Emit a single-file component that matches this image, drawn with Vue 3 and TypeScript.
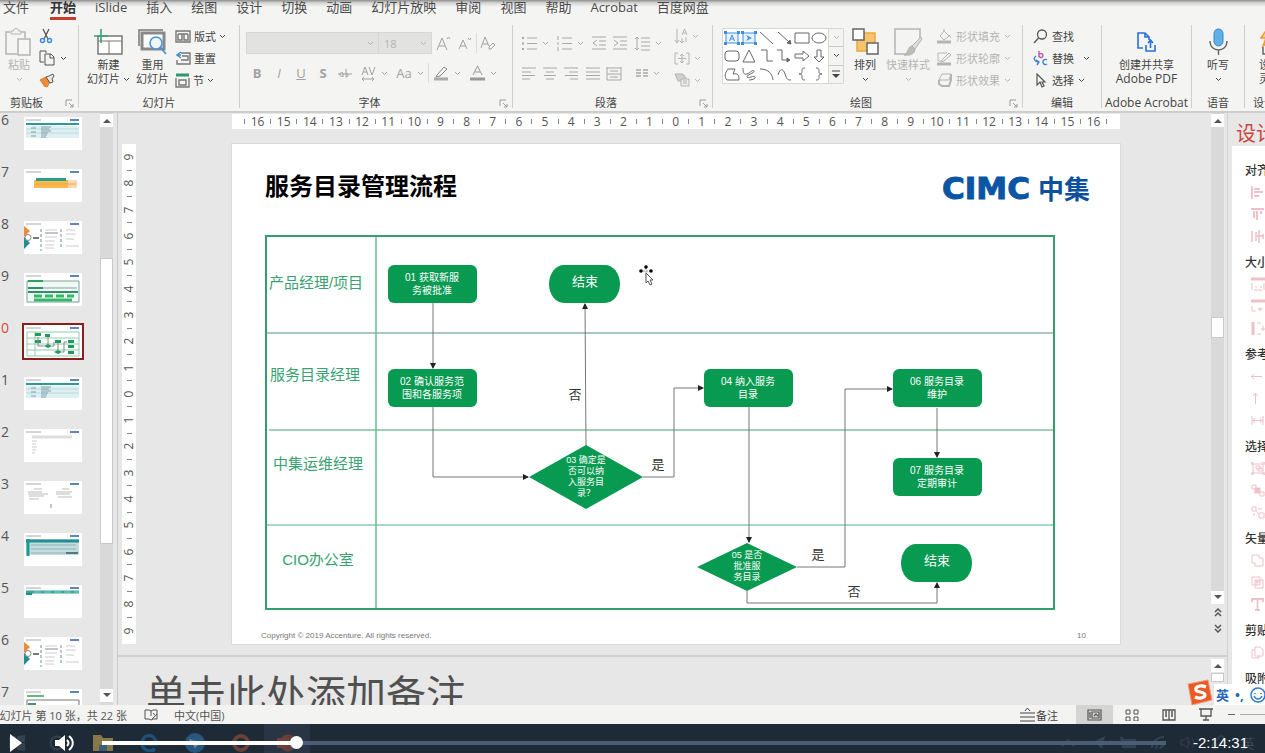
<script setup lang="ts">
import { computed, h, ref, type FunctionalComponent } from 'vue'

type Art = [number, number, string]

const art: Record<string, Art> = {
  chev: [7, 5, '<path d="M1 1l2.500 2.500L6 1"/>'],
  launcher: [9, 9, '<path d="M1 7V1h6M4 4l4 4M8 5v3H5" />'],
  paste: [28, 30, '<path d="M5 5H1v22h11M16 5h4v6" stroke-width="1.500"/><path d="M6 7V4h2.500a2.500 2.500 0 0 1 5 0H16v3z" fill="#f4f4f3"/><path d="M13 12h12v16H13z" fill="#f6f6f5" stroke-width="1.500"/>'],
  cut: [14, 16, '<path d="M4 1l5 10M10 1L5 11" stroke="#555" stroke-width="1.300"/><circle cx="3.500" cy="12.500" r="2" stroke="#3f8ddd" stroke-width="1.500"/><circle cx="10.500" cy="12.500" r="2" stroke="#3f8ddd" stroke-width="1.500"/>'],
  copy: [17, 16, '<path d="M5 12H1V1h6v2M6 4h6l3 3v8H6zM11 4v4h4" stroke="#555"/>'],
  brush: [16, 15, '<path d="M1 7l6-3 4 5-3 5-3-1-1-2z" fill="#f08b3a" stroke="#e07b2a"/><path d="M7 4l3-1 4-2 1 2-2 3 1 3-3 1z" fill="#e8e8e8" stroke="#555"/>'],
  newSlide: [29, 26, '<path d="M4 7h24v18H4z" stroke="#777" stroke-width="1.500" fill="#fff"/><path d="M4 12h24M15 12v13" stroke="#777"/><path d="M7 0v14M0 7h14" stroke="#35a374" stroke-width="1.600"/>'],
  reuse: [29, 27, '<path d="M1 18V2h24" stroke="#777" stroke-width="1.500"/><path d="M4 5h22v16H4z" stroke="#888" stroke-width="3" fill="#fff"/><circle cx="18" cy="15" r="6" stroke="#4b93d6" stroke-width="1.600" fill="#eef6fd"/><path d="M22 19l6 7" stroke="#4b93d6" stroke-width="1.800"/>'],
  layout: [16, 13, '<path d="M1 1h14v11H1zM3 4h10M3 4v6h4V4M9 4v6h4V4" stroke="#777" stroke-width="1.400"/>'],
  reset: [16, 14, '<path d="M6 2h9v11H2V9M7 5h6v4H6" stroke="#777" stroke-width="1.400"/><path d="M6 1L2 4l4 3M2 4h4" stroke="#3f8ddd" stroke-width="1.500"/>'],
  section: [15, 15, '<path d="M1 2h13" stroke="#2d9871" stroke-width="3"/><path d="M1 5v9h13V5M4 7h7v5H4z" stroke="#777" stroke-width="1.400"/>'],
  growA: [15, 15, '<path d="M1 14L6 2l5 12M3 10h6M11 3l1.500-2L14 3"/>'],
  shrinkA: [14, 13, '<path d="M1 12L5 3l4 9M2.500 9h5M10 1l1.500 2L13 1"/>'],
  clearA: [16, 15, '<path d="M1 12L5 1l4 9M3 8h5"/><path d="M9 11l4-4 2 2-4 4H9z"/>'],
  abc: [14, 10, '<path d="M0 6h14M5 8a2 2 0 1 1 0-3v4M8 1v8a2 2 0 1 0 0-4"/>'],
  av: [15, 15, '<path d="M1 9l3-8 3 8M2 6h4M8 1l3 8 3-8M1 13h12M3 11l-2 2 2 2M11 11l2 2-2 2"/>'],
  pen: [16, 16, '<path d="M4 10l7-8 3 2-7 7-4 1z" stroke="#888"/><path d="M1 14h14" stroke="#aaa" stroke-width="3"/>'],
  fontColor: [15, 16, '<path d="M3 10L7.500 1 12 10M5 7h5" stroke="#999"/><path d="M0 14h15" stroke="#999" stroke-width="3"/>'],
  bullets: [15, 15, '<path d="M5 2h10M5 7.500h10M5 13h10"/><path d="M0 2h2M0 7.500h2M0 13h2" stroke-width="2"/>'],
  numbers: [15, 15, '<path d="M5 2h10M5 7.500h10M5 13h10M1 0v4M1 6v3M1 11v4"/>'],
  outdent: [14, 14, '<path d="M0 1h14M7 5h7M7 9h7M0 13h14M5 4L1 7l4 3"/>'],
  indent: [14, 14, '<path d="M0 1h14M7 5h7M7 9h7M0 13h14M1 4l4 3-4 3"/>'],
  spacing: [15, 15, '<path d="M6 2h9M6 6h9M6 10h9M6 14h9M2 1v13M0 3l2-2 2 2M0 12l2 2 2-2"/>'],
  alignL: [14, 13, '<path d="M0 1h14M0 5h9M0 8.500h13M0 12h8"/>'],
  alignC: [14, 13, '<path d="M0 1h14M3 5h8M1 8.500h12M3 12h8"/>'],
  alignR: [14, 13, '<path d="M0 1h14M5 5h9M1 8.500h13M6 12h8"/>'],
  justify: [14, 13, '<path d="M0 1h14M0 5h14M0 8.500h14M0 12h14"/>'],
  distribute: [16, 15, '<path d="M1 1v13M15 1v13M1 2h14M4 5h8M1 8h14M4 11h8M1 14h14"/>'],
  columns: [12, 9, '<path d="M0 1h5M0 4h5M0 7h5M7 1h5M7 4h5M7 7h5" stroke-width="1.500"/>'],
  textDir: [14, 16, '<path d="M3 1v13M1 12l2 3 2-3M8 10v5M6 13l2 2 2-2M8 7l2.500-6L13 7M9 5h3M12 9v5"/>'],
  textBox: [16, 13, '<path d="M4 1H1v11h3M12 1h3v11h-3M4 6.500h8M8 2v9M6 4l2-2 2 2M6 9l2 2 2-2"/>'],
  smartArt: [16, 14, '<path d="M1 1h8l3 4-3 3H4z" fill="#d0d0d0"/><path d="M7 6h8v7H7z" fill="#eee"/><path d="M9 8h4M9 10h4"/>'],
  boxA: [16, 14, '<path d="M2 2h12v10H2z" stroke="#3f8ddd" fill="#eaf3fc"/><path d="M5.500 10L8 4l2.500 6M6.500 8h3" stroke="#3f8ddd"/><path d="M0 0h3v3H0zM13 0h3v3h-3zM0 11h3v3H0zM13 11h3v3h-3z" fill="#3f8ddd" stroke="none"/>'],
  boxB: [16, 14, '<path d="M2 2h12v10H2z" stroke="#3f8ddd" fill="#eaf3fc"/><path d="M5 4l6 3-6 3 2-3z" fill="#3f8ddd" stroke="none"/><path d="M0 0h3v3H0zM13 0h3v3h-3zM0 11h3v3H0zM13 11h3v3h-3z" fill="#3f8ddd" stroke="none"/>'],
  line: [15, 14, '<path d="M1 1l13 12"/>'],
  arrowLine: [15, 14, '<path d="M1 1l11 10"/><path d="M14 13l-4-1 3-3z" fill="currentColor"/>'],
  rect: [16, 12, '<path d="M1 1h14v10H1z"/>'],
  oval: [16, 12, '<ellipse cx="8" cy="6" rx="7" ry="5"/>'],
  round: [16, 12, '<rect x="1" y="1" width="14" height="10" rx="3"/>'],
  tri: [14, 14, '<path d="M7 1l6 12H1z"/>'],
  elbow: [14, 14, '<path d="M1 1h6v11h6"/>'],
  elbowArrow: [14, 14, '<path d="M0 1h5v10h7"/><path d="M13 11l-3-2v4z" fill="currentColor"/>'],
  rightArrow: [16, 12, '<path d="M1 4h8V1l6 5-6 5V8H1z"/>'],
  downArrow: [12, 14, '<path d="M4 1h4v7h3l-5 5-5-5h3z"/>'],
  freeform: [16, 13, '<path d="M4 1h7L9 6c5-1 6 1 6 6H3c-3-3-2-7 1-11z"/>'],
  scribble: [14, 14, '<path d="M1 1c0 5 1 7 4 6s6-5 7-3-8 4-7 6 7-2 8 0-4 3-6 3"/>'],
  arc: [15, 13, '<path d="M1 1c8 0 12 4 13 11"/>'],
  curve: [15, 13, '<path d="M1 7C3 0 6 0 8 6s3 6 6 6"/>'],
  braceL: [8, 14, '<path d="M7 1C4 1 4 2 4 4s0 3-3 3c3 0 3 1 3 3s0 3 3 3"/>'],
  braceR: [8, 14, '<path d="M1 1c3 0 3 1 3 3s0 3 3 3c-3 0-3 1-3 3s0 3-3 3"/>'],
  arrange: [27, 27, '<path d="M5 5h18v18H5z" fill="#f7c46c" stroke="#f0a63c" stroke-width="1.500"/><path d="M1 1h11v11H1zM15 15h11v11H15z" fill="#fff" stroke="#666" stroke-width="1.500"/>'],
  quick: [29, 28, '<path d="M14 26H1V1h25v12" stroke-width="1.500"/><path d="M27 9l-9 9 3 3 7-10z" fill="#ddd"/><path d="M18 18c-4 0-3 6-8 9 6 1 11-1 11-6z" fill="#bbb"/>'],
  fill: [15, 15, '<path d="M3 7l4-5 5 5-5 4zM7 2V0M12 6l2 3"/><path d="M0 13h14" stroke-width="3"/>'],
  outline: [15, 15, '<path d="M10 2H1v8h3M5 9l7-7 2 2-7 6-3 1z"/><path d="M0 13h14" stroke-width="3"/>'],
  effect: [15, 14, '<path d="M5 1h9l-2 6H2z"/><path d="M2 7v4l3 2h7l2-6V1" stroke-width="2"/>'],
  find: [15, 15, '<circle cx="9" cy="5.500" r="4.500" stroke="#555" stroke-width="1.300"/><path d="M5.500 9L1 14" stroke="#555" stroke-width="1.300"/>'],
  replace: [15, 15, '<path d="M6 0v6M6 4a2 2 0 1 1 0 1" stroke="#b45ab0" stroke-width="1.400"/><path d="M14 9a2.500 2.500 0 1 0 0 4M3 5c-3 2-2 5 2 6M3 9l3 2-2 3" stroke="#3f7fd0" stroke-width="1.400"/>'],
  select: [11, 15, '<path d="M2 1v11l3-3 2 5 2-1-2-4h3z" stroke="#555" stroke-width="1.200"/>'],
  pdf: [19, 20, '<path d="M6 16H1V1h7l4 4v3M8 1v4h4" stroke="#2b6fe0" stroke-width="1.600"/><path d="M9 13v6h9v-6M13.500 16V9M11 11l2.500-3 2.500 3" stroke="#2b6fe0" stroke-width="1.600"/>'],
  mic: [19, 28, '<rect x="5" y="1" width="9" height="17" rx="4.500" fill="#62b0ea" stroke="#3c86c8"/><path d="M1 13c0 12 17 12 17 0M9.500 22v5" stroke="#666" stroke-width="1.400"/>'],
  bolt: [22, 28, '<path d="M8 1h10l-5 7h6L4 18l3-8H2z" fill="#fbd08a" stroke="#ee9a35" stroke-width="1.500"/><path d="M4 19v7h18M8 22h14" stroke="#666" stroke-width="1.500"/>'],
  up: [8, 5, '<path d="M0 5l4-4 4 4z" fill="currentColor" stroke="none"/>'],
  down: [8, 5, '<path d="M0 0l4 4 4-4z" fill="currentColor" stroke="none"/>'],
  more: [8, 8, '<path d="M0 1h8"/><path d="M0 4l4 4 4-4z" fill="currentColor" stroke="none"/>'],
  pageUp: [8, 9, '<path d="M1 4l3-3 3 3M1 8l3-3 3 3" stroke-width="1.500"/>'],
  pageDown: [8, 9, '<path d="M1 1l3 3 3-3M1 5l3 3 3-3" stroke-width="1.500"/>'],
  spell: [14, 12, '<path d="M1 1h4l2 1 2-1h4v9H9l-2 1-2-1H1zM7 2v5M9 4l2 2M8 10l5-5"/>'],
  notes: [15, 15, '<path d="M0 6h15M0 10h15M0 14h15M5 4l2.500-3L10 4"/>'],
  normal: [15, 12, '<path d="M1 1h13v10H1zM3 3v6M5 3h7v6H5zM7 7l2-2 2 2" stroke-width="1.200"/>'],
  sorter: [14, 12, '<path d="M1 1h4v4H1zM9 1h4v4H9zM1 8h4v4H1zM9 8h4v4H9z"/>'],
  reading: [14, 12, '<path d="M1 1h6v10H1zM7 1h6v10H7zM3 3h2M3 5h2M3 7h2M9 3h2M9 5h2M9 7h2" stroke-width="1.300"/>'],
  show: [14, 13, '<path d="M0 1h14M2 1v7h10V1M7 8v4M4 12h6" stroke-width="1.300"/>'],
  d1: [13, 13, '<path d="M1 0v13M3 3h6M3 6h9M3 10h5" stroke-width="1.800"/>'],
  d2: [13, 13, '<path d="M0 1h13M3 3v7M6 3v9M10 3v3" stroke-width="2"/>'],
  d3: [13, 13, '<path d="M1 1v11M5 2v9M8 0v13M12 4v5M5 6h8" stroke-width="1.500"/>'],
  s1: [14, 14, '<path d="M0 2h14" stroke-width="3"/><path d="M1 6v7M13 6v7M4 10h2M9 10h2M3 13h8"/>'],
  s2: [14, 14, '<path d="M0 2h14" stroke-width="3"/><path d="M1 7v5h4M9 8v4M7 10h5"/>'],
  s3: [14, 13, '<path d="M2 0v13" stroke-width="3"/><path d="M6 1h4M6 12h4M12 4v5M10 7h4"/>'],
  r1: [11, 9, '<path d="M0 4.500h11M3 2L0 4.500 3 7"/>'],
  r2: [9, 11, '<path d="M4.500 0v11M2 3l2.500-3L7 3"/>'],
  r3: [13, 9, '<path d="M1 0v9M12 0v9M2 4.500h9M4 2L2 4.500 4 7M9 2l2 2.500L9 7"/>'],
  p1: [14, 13, '<path d="M2 2h10v9H2zM5 4h4v3H5zM7 6h4v3H7z"/><path d="M0 0h2v2H0zM12 0h2v2h-2zM0 11h2v2H0zM12 11h2v2h-2z"/>'],
  p2: [14, 13, '<path d="M1 1h4v4H1zM9 8h4v4H9z"/><path d="M4 4h5v5H4z" fill="currentColor"/>'],
  p3: [14, 13, '<path d="M1 1h4v4H1zM8 7h5v5H8zM5 5l3 3M7 3h4M3 7v3"/>'],
  v1: [13, 13, '<path d="M1 1h7v3h4v8H4V9H1z"/>'],
  v2: [13, 13, '<path d="M1 1h8v8H1zM4 4h8v8H4zM4 6h5M6 4v5"/>'],
  v3: [13, 13, '<path d="M1 4V1h11v3M6.500 1v11M4 12h5" stroke-width="1.800"/>'],
  c1: [13, 13, '<path d="M4 1h5l3 3v6H4zM4 4H1v8h7v-2"/>'],
  play: [12, 18, '<path d="M0 0l12 9-12 9z" fill="#fff" stroke="none"/>'],
  volume: [20, 18, '<path d="M0 6h4l6-5v16l-6-5H0z" fill="#fff" stroke="none"/><path d="M12 6c2 2 2 4 0 6M14 2c5 4 5 10 0 14" stroke="#fff" stroke-width="2"/>'],
  win: [16, 16, '<path d="M0 2l7-1v6H0zM8 1l8-1v7H8zM0 8h7v6l-7-1zM8 8h8v8l-8-1z" fill="currentColor" stroke="none"/>'],
  cortana: [16, 16, '<circle cx="8" cy="8" r="6.500" stroke-width="2"/>'],
  folder: [20, 17, '<path d="M0 1h8l2 3h10v13H0z" fill="#b49a52" stroke="none"/><path d="M6 17v-6h8v6" fill="#4a7593" stroke="none"/>'],
  edge: [18, 18, '<path d="M2 10h14c0-11-13-11-14-1 0 8 9 9 13 6" stroke="#1d6296" stroke-width="3.500"/>'],
  bird: [20, 20, '<circle cx="10" cy="10" r="10" fill="#2d6a9c" stroke="none"/><path d="M4 5c3 3 7 3 12 3-2 4-5 5-6 8-1-4-5-6-6-11z" fill="#8fb0ca" stroke="none"/>'],
  orange: [18, 18, '<circle cx="9" cy="9" r="7" stroke="#8a4a38" stroke-width="4"/>'],
  ppt: [20, 18, '<circle cx="11" cy="9" r="8.500" fill="#7c4539" stroke="none"/><path d="M0 4h10v10H0z" fill="#8f4736" stroke="none"/>'],
  tUp: [14, 8, '<path d="M1 7l6-6 6 6" stroke-width="2"/>'],
  plane: [14, 13, '<path d="M0 7L14 0l-3 13-4-4z" fill="currentColor" stroke="none"/>'],
  cam: [16, 11, '<path d="M0 0h3l1 2h12v9H2z" fill="currentColor" stroke="none"/>'],
  wifi: [14, 14, '<path d="M1 12C1 6 6 1 13 1M5 13c0-4 3-7 8-7M9 13c0-2 2-3 4-3" stroke-width="2"/>'],
  tVol: [16, 13, '<path d="M1 4h3l4-3v11L4 9H1zM10 4v5M12 2c2 3 2 6 0 9"/>'],
  link: [15, 15, '<path d="M6 9l-4 4M6 5l2-3c3-3 7 1 4 4l-3 3M9 10l-3 3c-3 2-6-1-4-4l3-3" stroke-width="1.500"/>'],
  smile: [16, 16, '<circle cx="8" cy="8" r="7" stroke="#2f7bd0" stroke-width="1.500"/><path d="M5 6v1M11 6v1M4 9c2 4 6 4 8 0" stroke="#2f7bd0" stroke-width="1.500"/>'],
  sogou: [28, 27, '<path d="M2 5l20-4 4 20-20 5z" fill="#ea5a24" stroke="#f49a78"/><path d="M20 8c-5-2-11-1-10 3 1 3 9 1 9 5 0 3-6 4-10 2" stroke="#fff" stroke-width="3.200"/>'],
}

const Glyph: FunctionalComponent<{ name: string }> = (props) => {
  const [w, hh, body] = art[props.name]
  return h('svg', {
    width: w, height: hh, viewBox: `0 0 ${w} ${hh}`, fill: 'none', stroke: 'currentColor',
    'aria-hidden': 'true', class: 'glyph', innerHTML: body,
  })
}
Glyph.props = ['name']

const tabs = ['文件', '开始', 'iSlide', '插入', '绘图', '设计', '切换', '动画', '幻灯片放映', '审阅', '视图', '帮助', 'Acrobat', '百度网盘']
const activeTab = ref('开始')

const shapes = ['boxA', 'boxB', 'line', 'arrowLine', 'rect', 'oval', 'round', 'tri', 'elbow', 'elbowArrow', 'rightArrow', 'downArrow', 'freeform', 'scribble', 'arc', 'curve', 'braceL', 'braceR']

const thumbArt: Record<string, string> = {
  table: '<path d="M2 6h53v2H2z" fill="#2a9a9a"/><path d="M2 9h53v12H2z" fill="#dff0f2"/><path d="M2 12h53M2 16h53" stroke="#b9d9de"/><path d="M7 11h5M7 15h5M7 19h5M17 10h10M17 12h8M17 14h10M17 16h7M17 18h6M17 20h5" stroke="#7f9fa8"/>',
  bars: '<path d="M10 11h34v8H10z" fill="#fbb84e"/><path d="M44 11h9v8h-9z" fill="#fbd7b4"/><path d="M12 9h30v3H12z" fill="#2a9a8c"/><path d="M12 15h40" stroke="#e9a840"/>',
  agenda: '<path d="M0 5l6 5-6 6z" fill="#ef8a34"/><path d="M0 28l6-6-6-6z" fill="#1f8f93"/><circle cx="4" cy="16.500" r="3" fill="#fff" stroke="#888"/><path d="M9 17h6" stroke="#777" stroke-width="2"/><path d="M17 8v22M37 8v18" stroke="#6f8f9a" stroke-dasharray="3 2"/><path d="M21 12h13" stroke="#888"/><path d="M21 9h12M21 16h12M21 20h10M21 24h9M21 27h9M42 9h9M42 13h10M42 18h8M42 25h13" stroke="#ccc"/>',
  plan: '<path d="M3 8h52v21H3z" fill="#f0faf4" stroke="#7da0a0"/><path d="M4 8h15" stroke="#27a258" stroke-width="2"/><path d="M4 15h15M4 19h50" stroke="#2f8f65" stroke-width="2"/><path d="M19 15h34" stroke="#8c9bb5"/><path d="M10 23h8M21 23h8M32 23h8M43 23h7M10 27h38" stroke="#35b866" stroke-width="3"/>',
  flow: '<path d="M3 7h52v24H3zM11 7v24M3 13h52M3 19h52M3 25h52" fill="none" stroke="#8fcdb0"/><path d="M11 8h6v3h-6zM21 9h5v3h-5zM11 15h6v3h-6zM31 15h6v3h-6zM44 15h6v3h-6zM44 20h6v3h-6zM44 26h6v3h-6zM20 21l4-2 4 2-4 2zM30 27l4-2 4 2-4 2z" fill="#1f9a5a"/><path d="M14 12v9h6M24 12v7M28 21h2v-4M34 18v7M38 27h2V17h3" fill="none" stroke="#888"/>',
  list: '<path d="M8 8h40" stroke="#ddd" stroke-width="3"/><path d="M8 12h5M8 15h4M8 18h5M8 21h4M8 24h3" stroke="#ccc"/>',
  notes: '<path d="M10 8h8M4 11h14M4 13h20M5 15h15M5 18h10M38 8h7M32 11h16M32 13h14M34 16h14" stroke="#bbb"/><path d="M27 23v4" stroke="#888"/>',
  matrix: '<path d="M2 6h53v16H2z" fill="#c3dcdf"/><path d="M2 8h53" stroke="#1f8f93" stroke-width="3"/><path d="M4 6v17" stroke="#1f9a93" stroke-width="3"/><path d="M7 12h45M7 16h45M7 20h45" stroke="#8fb0b5"/><path d="M42 20h12" stroke="#4f7c82" stroke-width="2"/>',
  header: '<path d="M2 7h53" stroke="#37a798" stroke-width="3"/><path d="M2 9h6" stroke="#1f8f83" stroke-width="2"/><path d="M10 7h45" stroke="#87cfc4" stroke-dasharray="7 3"/>',
  part: '<path d="M3 7h17" stroke="#5fbf82" stroke-width="2"/><path d="M3 11h52v22H3z" fill="none" stroke="#777"/><path d="M4 15h8" stroke="#4f8f72" stroke-width="2"/>',
}
const slides = [
  { n: '6', kind: 'table' }, { n: '7', kind: 'bars' }, { n: '8', kind: 'agenda' }, { n: '9', kind: 'plan' },
  { n: '0', kind: 'flow' }, { n: '1', kind: 'table' }, { n: '2', kind: 'list' }, { n: '3', kind: 'notes' },
  { n: '4', kind: 'matrix' }, { n: '5', kind: 'header' }, { n: '6', kind: 'agenda' }, { n: '7', kind: 'part' },
]
const current = ref(4)

const scale = (max: number) => Array.from({ length: max * 2 + 1 }, (_, i) => Math.abs(max - i))
const across = scale(16)
const down = scale(9)

const lanes = [
  { text: '产品经理/项目', x: 84, y: 139 },
  { text: '服务目录经理', x: 83, y: 231 },
  { text: '中集运维经理', x: 86, y: 320 },
  { text: 'CIO办公室', x: 86, y: 416 },
]
const steps = [
  { x: 156, y: 121, lines: ['01 获取新服', '务被批准'] },
  { x: 156, y: 225, lines: ['02 确认服务范', '围和各服务项'] },
  { x: 472, y: 225, lines: ['04 纳入服务', '目录'] },
  { x: 661, y: 225, lines: ['06 服务目录', '维护'] },
  { x: 661, y: 314, lines: ['07 服务目录', '定期审计'] },
]
const ends = [{ x: 317, y: 121 }, { x: 669, y: 400 }]
const decisions = [
  { x: 354, y: 333, rx: 57, ry: 32, top: 316, lines: ['03 确定是', '否可以纳', '入服务目', '录？'] },
  { x: 515, y: 423, rx: 50, ry: 24, top: 411, lines: ['05 是否', '批准服', '务目录'] },
]
const wires = [
  'M201 159V224', 'M201 263V333H296', 'M354 302L353 160', 'M411 333H442V244H471',
  'M517 263V398', 'M565 423H613V245H660', 'M705 264V313', 'M515 447V459H705V439',
]
const answers = [
  { t: '否', x: 343, y: 250 }, { t: '是', x: 426, y: 320 }, { t: '是', x: 586, y: 410 }, { t: '否', x: 622, y: 447 },
]

const tools = [
  { title: '对齐', icons: ['d1', 'd2', 'd3'] },
  { title: '大小', icons: ['s1', 's2', 's3'] },
  { title: '参考', icons: ['r1', 'r2', 'r3'] },
  { title: '选择', icons: ['p1', 'p2', 'p3'] },
  { title: '矢量', icons: ['v1', 'v2', 'v3'] },
  { title: '剪贴', icons: ['c1'] },
  { title: '吸附', icons: [] },
]

const position = ref(179)
const played = computed(() => ({ '--played': position.value / 10 + '%' }))
const dockIcons = ['cortana', 'folder', 'edge', 'bird', 'orange', 'ppt']
const trayIcons = ['tUp', 'plane', 'cam', 'wifi', 'tVol', 'link']
</script>

<template>
  <div class="app">
    <nav class="tabs">
      <button v-for="t in tabs" :key="t" class="tab" :class="{ on: t === activeTab }" @click="activeTab = t">{{ t }}</button>
    </nav>

    <header class="ribbon">
      <section class="group g-clip">
        <div class="body">
          <button class="big dim"><span class="pic"><Glyph name="paste" /></span><span>粘贴</span><span class="line"><Glyph name="chev" /></span></button>
          <div class="stack">
            <button class="row" aria-label="剪切"><Glyph name="cut" /></button>
            <button class="row" aria-label="复制"><Glyph name="copy" /><Glyph name="chev" /></button>
            <button class="row" aria-label="格式刷"><Glyph name="brush" /></button>
          </div>
        </div>
        <footer><span>剪贴板</span><Glyph name="launcher" /></footer>
      </section>

      <section class="group g-slides">
        <div class="body">
          <button class="big"><span class="pic"><Glyph name="newSlide" /></span><span>新建</span><span class="line">幻灯片<Glyph name="chev" /></span></button>
          <button class="big"><span class="pic"><Glyph name="reuse" /></span><span>重用</span><span class="line">幻灯片</span></button>
          <div class="stack">
            <button class="row"><Glyph name="layout" />版式<Glyph name="chev" /></button>
            <button class="row"><Glyph name="reset" />重置</button>
            <button class="row"><Glyph name="section" />节<Glyph name="chev" /></button>
          </div>
        </div>
        <footer><span>幻灯片</span></footer>
      </section>

      <section class="group g-font dim">
        <div class="body rows">
          <div class="strip">
            <label class="combo wide"><select aria-label="字体"><option></option></select><Glyph name="chev" /></label>
            <label class="combo"><select aria-label="字号"><option>18</option></select><Glyph name="chev" /></label>
            <button class="cell" aria-label="增大字号"><Glyph name="growA" /></button>
            <button class="cell" aria-label="减小字号"><Glyph name="shrinkA" /></button>
            <i class="bar"></i>
            <button class="cell" aria-label="清除格式"><Glyph name="clearA" /></button>
          </div>
          <div class="strip">
            <button class="cell"><b>B</b></button>
            <button class="cell"><em>I</em></button>
            <button class="cell"><u>U</u></button>
            <button class="cell"><b>S</b></button>
            <button class="cell" aria-label="删除线"><Glyph name="abc" /></button>
            <button class="cell split" aria-label="字符间距"><Glyph name="av" /><Glyph name="chev" /></button>
            <button class="cell split">Aa<Glyph name="chev" /></button>
            <i class="bar"></i>
            <button class="cell split" aria-label="突出显示"><Glyph name="pen" /><Glyph name="chev" /></button>
            <button class="cell split" aria-label="字体颜色"><Glyph name="fontColor" /><Glyph name="chev" /></button>
          </div>
        </div>
        <footer><span>字体</span><Glyph name="launcher" /></footer>
      </section>

      <section class="group g-para dim">
        <div class="body">
          <div class="rows">
            <div class="strip">
              <button class="cell split" aria-label="项目符号"><Glyph name="bullets" /><Glyph name="chev" /></button>
              <button class="cell split" aria-label="编号"><Glyph name="numbers" /><Glyph name="chev" /></button>
              <button class="cell" aria-label="减少缩进"><Glyph name="outdent" /></button>
              <button class="cell" aria-label="增加缩进"><Glyph name="indent" /></button>
              <button class="cell split" aria-label="行距"><Glyph name="spacing" /><Glyph name="chev" /></button>
            </div>
            <div class="strip">
              <button v-for="a in ['alignL', 'alignC', 'alignR', 'justify', 'distribute']" :key="a" class="cell" :aria-label="a"><Glyph :name="a" /></button>
              <button class="cell split last" aria-label="分栏"><Glyph name="columns" /><Glyph name="chev" /></button>
            </div>
          </div>
          <div class="stack">
            <button v-for="a in ['textDir', 'textBox', 'smartArt']" :key="a" class="row" :aria-label="a"><Glyph :name="a" /><Glyph name="chev" /></button>
          </div>
        </div>
        <footer><span>段落</span><Glyph name="launcher" /></footer>
      </section>

      <section class="group g-draw">
        <div class="body">
          <div class="gallery">
            <div class="shapes">
              <button v-for="s in shapes" :key="s" :aria-label="s"><Glyph :name="s" /></button>
            </div>
            <div class="steps">
              <button class="dim" aria-label="上一行"><Glyph name="chev" /></button>
              <button aria-label="下一行"><Glyph name="chev" /></button>
              <button aria-label="更多"><Glyph name="more" /></button>
            </div>
          </div>
          <button class="big"><span class="pic"><Glyph name="arrange" /></span><span>排列</span><span class="line"><Glyph name="chev" /></span></button>
          <button class="big dim"><span class="pic"><Glyph name="quick" /></span><span>快速样式</span><span class="line"><Glyph name="chev" /></span></button>
          <div class="stack dim">
            <button class="row"><Glyph name="fill" />形状填充<Glyph name="chev" /></button>
            <button class="row"><Glyph name="outline" />形状轮廓<Glyph name="chev" /></button>
            <button class="row"><Glyph name="effect" />形状效果<Glyph name="chev" /></button>
          </div>
        </div>
        <footer><span>绘图</span><Glyph name="launcher" /></footer>
      </section>

      <section class="group g-edit">
        <div class="body">
          <div class="stack">
            <button class="row"><Glyph name="find" />查找</button>
            <button class="row"><Glyph name="replace" />替换<Glyph name="chev" class="far" /></button>
            <button class="row"><Glyph name="select" />选择<Glyph name="chev" /></button>
          </div>
        </div>
        <footer><span>编辑</span></footer>
      </section>

      <section class="group g-pdf">
        <div class="body mid">
          <button class="big"><span class="pic"><Glyph name="pdf" /></span><span>创建并共享</span><span class="line latin">Adobe PDF</span></button>
        </div>
        <footer><span class="latin">Adobe Acrobat</span></footer>
      </section>

      <section class="group g-voice">
        <div class="body mid">
          <button class="big"><span class="pic"><Glyph name="mic" /></span><span>听写</span><span class="line"><Glyph name="chev" /></span></button>
        </div>
        <footer><span>语音</span></footer>
      </section>

      <section class="group g-design">
        <div class="body">
          <button class="big"><span class="pic"><Glyph name="bolt" /></span><span>设计</span><span class="line">灵感</span></button>
        </div>
        <footer><span>设计器</span></footer>
      </section>
    </header>

    <main class="work">
      <aside class="pane">
        <ol class="thumbs">
          <li v-for="(s, i) in slides" :key="i">
            <button class="thumb" :class="{ on: i === current }" @click="current = i">
              <span class="num">{{ s.n }}</span>
              <svg class="mini" viewBox="0 0 58 33">
                <rect width="58" height="33" fill="#fff" />
                <path d="M2 3h15" stroke="#aaa" />
                <path d="M46 3h9" stroke="#5f86b8" stroke-width="2" />
                <g v-html="thumbArt[s.kind]"></g>
              </svg>
            </button>
          </li>
        </ol>
        <div class="scroll left">
          <button class="knob" aria-label="向上"><Glyph name="up" /></button>
          <i class="before"></i><i class="grip"></i><i class="after"></i>
          <button class="knob" aria-label="向下"><Glyph name="down" /></button>
        </div>
      </aside>

      <section class="editor">
        <div class="canvas">
          <div class="stage">
            <div class="ruler across">
              <template v-for="(n, i) in across" :key="i"><i></i><span>{{ n }}</span></template><i></i>
            </div>
            <div class="ruler down">
              <template v-for="(n, i) in down" :key="i"><span>{{ n }}</span><i v-if="i < down.length - 1"></i></template>
            </div>
            <svg class="slide" viewBox="0 0 888 500" role="img" aria-label="服务目录管理流程">
              <defs>
                <marker id="tip" viewBox="0 0 6 6" refX="5" refY="3" markerWidth="6" markerHeight="6" markerUnits="userSpaceOnUse" orient="auto"><path d="M0 0l6 3-6 3z" fill="#222" /></marker>
              </defs>
              <text class="title" x="33" y="51">服务目录管理流程</text>
              <text class="brand" x="710" y="55">CIMC</text>
              <text class="brand-cn" x="806" y="55">中集</text>

              <path d="M34 189H822" stroke="#8db4b0" stroke-width="1.500" />
              <path d="M37 286H822" stroke="#7fc19d" stroke-width="1.500" />
              <path d="M34 381H822" stroke="#86ccb2" stroke-width="1.500" />
              <path d="M144 92V465" stroke="#6dbb93" stroke-width="1.500" />
              <rect x="34" y="92" width="788" height="373" fill="none" stroke="#339f6e" stroke-width="2" />

              <text v-for="l in lanes" :key="l.text" class="lane" :x="l.x" :y="l.y + 5">{{ l.text }}</text>
              <path v-for="w in wires" :key="w" :d="w" class="wire" marker-end="url(#tip)" />

              <g v-for="s in steps" :key="s.lines[0]">
                <rect :x="s.x" :y="s.y" width="89" height="38" rx="6" class="node" />
                <text v-for="(t, k) in s.lines" :key="t" class="small" :x="s.x + 44" :y="s.y + 16 + k * 13">{{ t }}</text>
              </g>
              <g v-for="e in ends" :key="e.x">
                <rect :x="e.x" :y="e.y" width="71" height="38" rx="15" ry="19" class="node" />
                <text class="end" :x="e.x + 36" :y="e.y + 21">结束</text>
              </g>
              <g v-for="d in decisions" :key="d.x">
                <path class="node" :d="`M${d.x - d.rx} ${d.y}L${d.x} ${d.y - d.ry}L${d.x + d.rx} ${d.y}L${d.x} ${d.y + d.ry}Z`" />
                <text v-for="(t, k) in d.lines" :key="t" class="tiny" :x="d.x" :y="d.top + 3 + k * 11">{{ t }}</text>
              </g>
              <text v-for="a in answers" :key="a.x" class="answer" :x="a.x" :y="a.y + 5">{{ a.t }}</text>

              <g transform="translate(407 121)">
                <path d="M7 0v12M1 6h12" stroke="#999" stroke-dasharray="2 1" />
                <circle cx="7" cy="2" r="1.800" /><circle cx="2" cy="6" r="1.800" /><circle cx="12" cy="6" r="1.800" />
                <path d="M7 8v10l2-2 2 4 2-1-2-4h3z" fill="#fff" stroke="#555" />
              </g>
              <text class="fine" x="29" y="494">Copyright © 2019 Accenture. All rights reserved.</text>
              <text class="fine" x="845" y="494">10</text>
            </svg>
          </div>
          <div class="scroll right">
            <button class="knob" aria-label="向上"><Glyph name="up" /></button>
            <i class="before"></i><i class="grip"></i><i class="after"></i>
            <button class="knob" aria-label="向下"><Glyph name="down" /></button>
            <button class="jump" aria-label="上一张"><Glyph name="pageUp" /></button>
            <button class="jump" aria-label="下一张"><Glyph name="pageDown" /></button>
          </div>
        </div>
        <div class="remarks">
          <p>单击此处添加备注</p>
          <div class="scroll short">
            <button class="knob" aria-label="向上"><Glyph name="up" /></button>
            <i class="grip"></i>
          </div>
        </div>
      </section>

      <aside class="design">
        <h2>设计</h2>
        <div class="sheet">
          <section v-for="t in tools" :key="t.title">
            <h3>{{ t.title }}</h3>
            <div v-for="c in t.icons" :key="c" class="tool"><Glyph :name="c" /></div>
          </section>
        </div>
      </aside>

      <div class="ime">
        <Glyph name="sogou" />
        <div class="ime-bar"><b>英</b><span>•,</span><Glyph name="smile" /></div>
      </div>
    </main>

    <div class="status">
      <span class="count">幻灯片 第 10 张，共 22 张</span>
      <Glyph name="spell" />
      <span class="lang">中文(中国)</span>
      <button class="notes-btn"><Glyph name="notes" />备注</button>
      <button class="view on" aria-label="普通"><Glyph name="normal" /></button>
      <button class="view" aria-label="浏览"><Glyph name="sorter" /></button>
      <button class="view" aria-label="阅读"><Glyph name="reading" /></button>
      <button class="view" aria-label="放映"><Glyph name="show" /></button>
      <span class="zoom"><i></i><i class="rail"></i></span>
    </div>

    <div class="player">
      <div class="dock">
        <span class="first"><Glyph name="win" /></span>
        <span v-for="d in dockIcons" :key="d" :class="{ lit: d === 'ppt' }"><Glyph :name="d" /></span>
        <em></em>
        <span v-for="d in trayIcons" :key="d" class="tray"><Glyph :name="d" /></span>
        <span class="tray">英</span>
      </div>
      <button class="p-play" aria-label="播放"><Glyph name="play" /></button>
      <button class="p-vol" aria-label="音量"><Glyph name="volume" /></button>
      <input v-model.number="position" class="seek" type="range" min="0" max="1000" aria-label="进度" :style="played" />
      <time>-2:14:31</time>
    </div>
  </div>
</template>

<style>
html, body { margin: 0; overflow: hidden; }
</style>

<style scoped>
.app { display: flex; flex-direction: column; height: 100vh; overflow: hidden; background: #f4f4f3; color: #444; font-family: "Open Sans", "Noto Sans CJK SC", sans-serif; font-size: 11px; }
button { margin: 0; padding: 0; border: 0; background: none; color: inherit; font: inherit; }
i { display: block; }
.glyph { display: block; flex: none; }

.tabs { display: flex; flex: none; gap: 19px; height: 24px; padding-left: 3px; background: linear-gradient(#8f8f8f 0, #d6d6d6 3px, #f4f4f3 7px); }
.tab { height: 20px; border-bottom: 3px solid transparent; padding-bottom: 3px; font-size: 13px; line-height: 14px; white-space: nowrap; color: #4a4a4a; }
.tab:first-child { margin-right: 2px; }
.tab.on { border-color: #c43e2a; font-weight: 700; color: #333; }

.ribbon { display: flex; flex: none; box-sizing: border-box; height: 89px; padding-top: 1px; border-bottom: 2px solid #cdcdcb; overflow: hidden; }
.group { display: flex; flex: none; flex-direction: column; box-sizing: border-box; height: 83px; border-right: 1px solid #cfcfcd; }
.group .body { display: flex; flex: 1; align-items: flex-start; }
.group .body.mid { justify-content: center; }
.group footer { display: flex; align-items: center; height: 10px; line-height: 10px; padding-right: 4px; white-space: nowrap; color: #444; }
.group footer span { flex: 1; text-align: center; }
.group footer svg { color: #999; }
.dim { color: #b4b4b2; }
.latin { font-size: 12px; }
.big { display: flex; flex-direction: column; align-items: center; line-height: 14px; white-space: nowrap; }
.pic { display: flex; align-items: center; height: 33px; }
.line { display: flex; align-items: center; gap: 3px; height: 14px; }
.stack { display: flex; flex-direction: column; }
.row { display: flex; align-items: center; gap: 4px; height: 22px; white-space: nowrap; }
.rows { display: flex; flex-direction: column; }
.group .body.rows { flex-direction: column; align-items: stretch; }
.strip { display: flex; align-items: center; height: 30px; }
.cell { display: flex; align-items: center; justify-content: center; width: 22px; height: 22px; font-size: 13px; }
.cell.split { gap: 5px; width: 36px; }
.bar { width: 1px; height: 20px; background: #dcdcda; }

.g-clip { width: 79px; }
.g-clip .body { gap: 6px; padding-left: 5px; }
.g-clip footer span { padding-right: 12px; }
.g-slides { width: 161px; }
.g-slides .body { gap: 6px; padding-left: 8px; }
.g-slides .row { gap: 3px; }
.g-font { width: 273px; }
.g-font .body { padding: 3px 6px 0; }
.g-font .cell { color: #a2a2a0; }
.combo { display: flex; align-items: center; justify-content: flex-end; box-sizing: border-box; width: 54px; height: 22px; padding-right: 4px; border: 1px solid #d6d6d4; background: #e2e2e0; }
.combo.wide { width: 132px; border-right: 0; }
.combo select { flex: 1; min-width: 0; height: 20px; padding: 0 0 0 5px; border: 0; appearance: none; background: none; color: #b4b4b2; font: inherit; }
.g-para { width: 200px; }
.g-para .body { padding-left: 5px; gap: 8px; }
.g-para .rows { padding-top: 3px; width: 148px; }
.g-para .cell { color: #a8a8a6; }
.g-para .cell.split.last { margin-left: 6px; }
.g-draw { width: 310px; }
.g-draw .body { gap: 7px; padding-left: 9px; }
.gallery { display: flex; box-sizing: border-box; width: 122px; height: 56px; margin-top: 3px; border: 1px solid #d8d8d6; background: #fff; }
.shapes { display: grid; flex: 1; grid-template-columns: repeat(6, 1fr); grid-template-rows: repeat(3, 1fr); }
.shapes button { display: flex; align-items: center; justify-content: center; color: #666; }
.steps { display: flex; flex-direction: column; width: 14px; background: #f4f4f3; border-left: 1px solid #d8d8d6; }
.steps button { display: flex; flex: 1; align-items: center; justify-content: center; }
.steps button + button { border-top: 1px solid #c8c8c6; }
.g-draw .big:nth-of-type(1) { width: 28px; }
.g-edit { width: 79px; }
.g-edit .body { padding-left: 10px; }
.g-edit .row svg:first-child { width: 15px; }
.g-edit .far { margin-left: 5px; }
.g-edit footer, .g-pdf footer, .g-voice footer, .g-slides footer { padding-right: 0; }
.g-pdf { width: 90px; }
.g-voice { width: 53px; }
.g-design { flex: 1 0 0; min-width: 0; border-right: 0; padding-left: 8px; overflow: hidden; }
.g-design footer span { flex: none; }
.g-design .big { align-items: flex-start; padding-left: 6px; }

.work { position: relative; display: flex; flex: 1; min-height: 0; background: #e7e7e7; overflow: hidden; }
.pane { display: flex; flex: none; box-sizing: border-box; width: 118px; border-right: 1px solid #c9c9c9; overflow: hidden; }
.thumbs { flex: 1; margin: 0; padding: 2px 0 0; list-style: none; }
.thumbs li { height: 52px; }
.thumb { display: flex; align-items: flex-start; height: 39px; }
.num { width: 22px; padding-left: 1px; box-sizing: border-box; text-align: left; font-size: 14px; line-height: 10px; color: #555; }
.mini { box-sizing: border-box; width: 62px; height: 37px; padding: 2px; }
.thumb.on .num { color: #cf4b3c; }
.thumb.on .mini { border: 2px solid #8b1f1c; padding: 0; background: #fff; }

.scroll { display: flex; flex: none; flex-direction: column; width: 13px; background: #d9d9d9; }
.scroll.left { width: 13px; margin-right: 4px; padding: 1px 0 3px; }
.knob { display: flex; flex: none; align-items: center; justify-content: center; height: 13px; background: #fff; color: #555; }
.grip { box-sizing: border-box; background: #fff; border: 1px solid #c9c9c9; }
.left .before { flex: 132; }
.left .grip { flex: 285; }
.left .after { flex: 146; }
.scroll.right { margin-right: 3px; padding-top: 1px; }
.right .before { flex: 190; }
.right .grip { flex: none; height: 21px; }
.right .after { flex: 253; }
.jump { display: flex; flex: none; align-items: center; justify-content: center; height: 16px; background: #e7e7e7; color: #555; }
.jump:last-child { height: 35px; padding-bottom: 19px; }

.editor { display: flex; flex: 1; flex-direction: column; min-width: 0; }
.canvas { display: flex; flex: 1; min-height: 0; }
.stage { display: grid; flex: 1; grid-template-columns: 14px 1fr; grid-template-rows: 15px auto; gap: 15px 96px; align-content: start; padding: 1px 91px 0 4px; }
.ruler { display: flex; align-items: center; background: #fff; color: #555; font-size: 12px; line-height: 14px; }
.ruler span { display: flex; justify-content: center; width: 0; }
.ruler i { background: #888; width: 1px; height: 5px; }
.across { grid-column: 2; justify-content: space-between; padding: 0 12px; }
.down { grid-row: 2; flex-direction: column; justify-content: space-between; box-sizing: border-box; padding: 13px 0; }
.down span { width: 14px; height: 0; align-items: center; transform: rotate(-90deg); }
.down i { width: 5px; height: 1px; }
.slide { display: block; width: 100%; background: #fff; outline: 1px solid #dadada; font-family: "Liberation Sans", "Noto Sans CJK SC", sans-serif; }
.title { font-size: 24px; font-weight: 700; fill: #000; }
.brand { font-family: "DejaVu Sans", sans-serif; font-size: 31px; font-weight: 700; fill: #0a55a4; stroke: #0a55a4; stroke-width: 1px; }
.brand-cn { font-size: 26px; font-weight: 700; fill: #0c4f9c; }
.lane { font-size: 15px; fill: #3aa172; text-anchor: middle; }
.wire { fill: none; stroke: #777; stroke-width: 1px; }
.node { fill: #079a50; }
.small, .tiny, .end { fill: #fff; text-anchor: middle; }
.small { font-size: 10px; }
.tiny { font-size: 9px; }
.end { font-size: 13px; }
.answer { font-size: 13px; fill: #333; text-anchor: middle; }
.fine { font-size: 8px; fill: #777; }

.remarks { display: flex; flex: none; box-sizing: border-box; height: 50px; padding-left: 28px; border-top: 2px solid #cecece; overflow: hidden; }
.remarks p { flex: 1; margin: 16px 0 0; font-size: 40px; line-height: 42px; white-space: nowrap; color: #505050; }
.short { margin-right: 3px; gap: 1px; padding-top: 2px; background: #e7e7e7; }
.short .grip { height: 9px; }

.design { flex: none; box-sizing: border-box; width: 38px; padding-left: 4px; border-left: 1px solid #d2d2d2; overflow: hidden; }
.design h2 { margin: 0; padding: 7px 0 0 4px; height: 26px; font-size: 20px; font-weight: 400; line-height: 28px; white-space: nowrap; color: #c9463c; }
.sheet { height: 100%; padding: 15px 0 0 13px; background: #fff; }
.sheet section { padding-bottom: 6px; }
.sheet h3 { margin: 0; font-size: 12px; font-weight: 500; line-height: 20px; white-space: nowrap; color: #333; }
.tool { display: flex; align-items: center; height: 22px; padding-left: 6px; color: #efc0c7; }

.ime { position: absolute; right: 0; bottom: 0; display: flex; width: 79px; height: 26px; }
.ime-bar { display: flex; flex: 1; align-items: center; gap: 6px; height: 21px; align-self: flex-end; background: #fff; color: #2567b8; overflow: hidden; white-space: nowrap; }
.ime-bar b { padding-left: 2px; font-size: 13px; }
.ime-bar span { font-size: 13px; font-weight: 700; }

.status { display: flex; flex: none; align-items: center; height: 19px; background: #f3f3f2; color: #555; white-space: nowrap; }
.count { display: flex; justify-content: flex-end; width: 127px; margin-right: 17px; overflow: hidden; }
.lang { flex: 1; padding-left: 16px; }
.notes-btn { display: flex; align-items: center; gap: 1px; margin-right: 18px; color: #444; }
.view { display: flex; align-items: center; justify-content: center; width: 37px; height: 19px; }
.view.on { background: #d4d4d3; }
.zoom { display: flex; align-items: center; gap: 5px; width: 37px; margin-left: 4px; }
.zoom i { width: 7px; height: 1px; background: #666; }
.zoom .rail { flex: 1; background: #aaa; }

.player { position: relative; display: flex; flex: none; align-items: center; box-sizing: border-box; height: 29px; padding: 8px 17px 0 10px; background: #1f2a37; }
.player > * { position: relative; }
.player .dock { position: absolute; inset: 0; display: flex; padding-right: 2px; color: #3e4c5c; overflow: hidden; }
.dock span { display: flex; flex: none; align-items: center; justify-content: center; box-sizing: border-box; width: 46px; padding-top: 8px; }
.dock .first { width: 34px; }
.dock span .glyph { opacity: 0.7; }
.dock .lit { background: #293544; }
.dock em { flex: 1; }
.dock .tray { width: 30px; font-size: 13px; line-height: 14px; }
.p-vol { margin-left: 33px; }
.seek { flex: 1; height: 13px; margin: 0 27px 0 27px; min-width: 0; appearance: none; background: linear-gradient(90deg, #fff var(--played), #4c5d74 var(--played)) center / 100% 4px no-repeat; }
.seek::-webkit-slider-thumb { appearance: none; width: 13px; height: 13px; border-radius: 50%; background: #fff; }
.player time { color: #fff; font-family: "Liberation Sans", sans-serif; font-size: 15px; line-height: 18px; }
</style>
